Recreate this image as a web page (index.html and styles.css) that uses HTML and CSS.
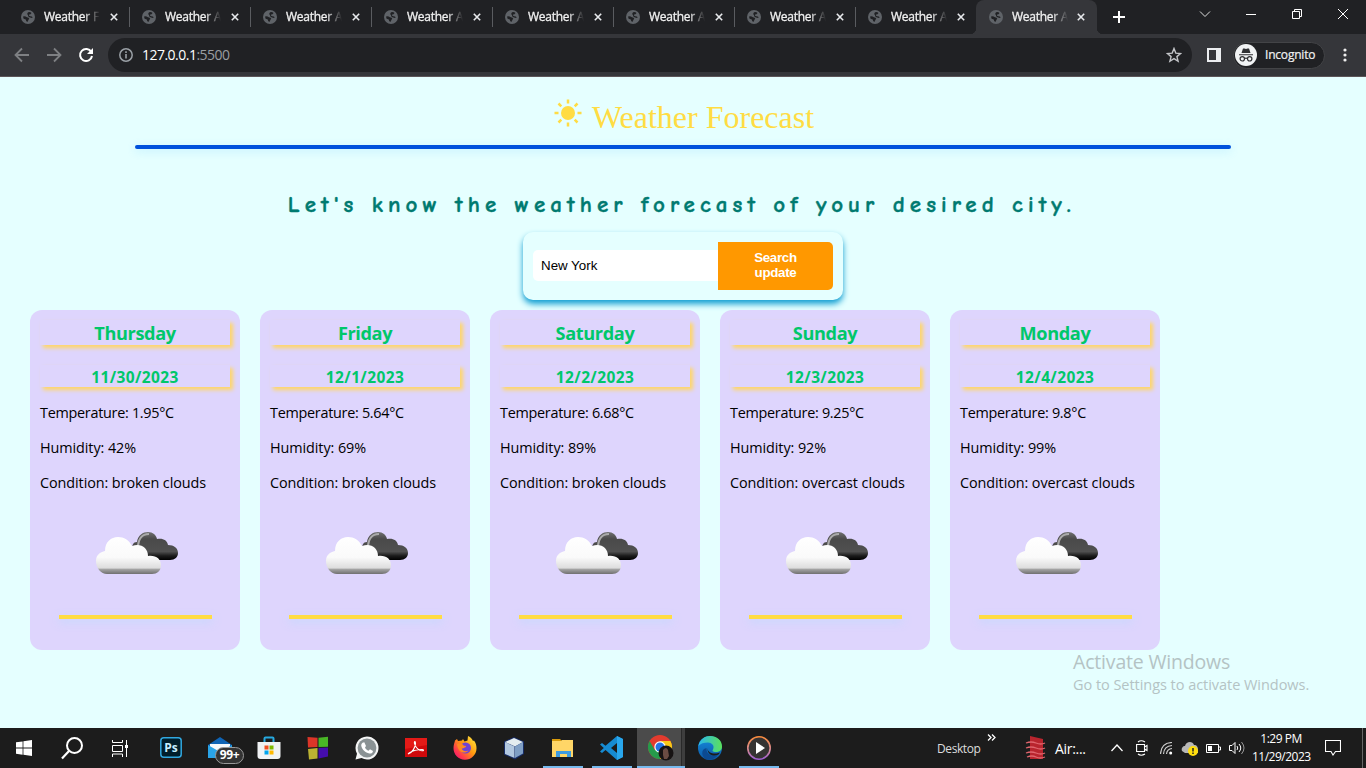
FILE: index.html
```html
<!DOCTYPE html>
<html lang="en">
<head>
<meta charset="utf-8">
<title>Weather Forecast</title>
<link rel="stylesheet" href="styles.css">
</head>
<body>
<svg class="defs" width="0" height="0">
  <defs>
    <linearGradient id="white-cloud" x1="0" y1="0" x2="0" y2="1"><stop offset="0" stop-color="#fff"/><stop offset=".55" stop-color="#fafafa"/><stop offset=".84" stop-color="#ddd"/><stop offset=".87" stop-color="#a5a5a5"/><stop offset="1" stop-color="#707070"/></linearGradient>
    <linearGradient id="dark-cloud" x1="0" y1="0" x2="0" y2="1"><stop offset="0" stop-color="#707070"/><stop offset=".25" stop-color="#4a4a4a"/><stop offset=".7" stop-color="#505050"/><stop offset=".85" stop-color="#1b1b1b"/><stop offset="1" stop-color="#000"/></linearGradient>
    <linearGradient id="fox" x1="1" y1="0" x2="0" y2="1"><stop offset="0" stop-color="#fff044"/><stop offset=".45" stop-color="#ff980e"/><stop offset=".75" stop-color="#ff3750"/><stop offset="1" stop-color="#eb0878"/></linearGradient>
    <linearGradient id="edge-a" x1="0" y1="0" x2="1" y2="0"><stop offset="0" stop-color="#2bb8ee"/><stop offset="1" stop-color="#5be15a"/></linearGradient>
    <linearGradient id="edge-b" x1="0" y1="0" x2="0" y2="1"><stop offset="0" stop-color="#168de1"/><stop offset="1" stop-color="#0c59a4"/></linearGradient>
    <linearGradient id="ring" x1="0" y1="0" x2="0" y2="1"><stop offset="0" stop-color="#f98b3c"/><stop offset=".6" stop-color="#d58a9a"/><stop offset="1" stop-color="#9a5bd0"/></linearGradient>
    <symbol id="globe" viewBox="0 0 14 14"><circle cx="7" cy="7" r="7" fill="#5f6368"/><path d="M2 6.500 4 6.200l2 1 1.600.5.6 1-.9 1.200-.5 1.800-1.600-.4-.4-1.800-2.200-.8zM7 2.300l2-.3 1.500 1-1 1.200-1.300.3-.4 1 1.500.8 1.500.2.8.8-.5.8-1.300-.4-1.900-.6L7 6V4.700l-1-.5z" fill="#202124"/></symbol>
    <symbol id="x" viewBox="0 0 8 8"><path d="m.8.8 6.400 6.400m0-6.400L.8 7.200" stroke="#e8eaed" stroke-width="1.600" fill="none"/></symbol>
    <symbol id="clouds" viewBox="0 0 86 46"><path d="M37 20c0-5 1-8 5-8 1-7 6-10 11-10s8 3 9 7c6-1 10 1 11 6 6 0 10 3 10 8 0 4-3 7-8 7H47c-7 0-10-4-10-10z" fill="url(#dark-cloud)"/><path d="M43 18c0-9 4-14 11-14" fill="none" stroke="#aaa" stroke-width="2.200"/><path d="M1 31c0-6 4-9 9-10C10 12 16 7 23 7c6 0 11 3 14 9 9-3 16 2 16 10 8-1 13 3 13 9s-4 9-9 9H12C6 44 1 38 1 31z" fill="url(#white-cloud)"/></symbol>
  </defs>
</svg>

<header class="browser">
  <nav class="tabs">
    <div class="tab"><svg class="globe"><use href="#globe"/></svg><span class="tab-title">Weather F</span><svg class="close"><use href="#x"/></svg></div>
    <div class="tab"><svg class="globe"><use href="#globe"/></svg><span class="tab-title">Weather A</span><svg class="close"><use href="#x"/></svg></div>
    <div class="tab"><svg class="globe"><use href="#globe"/></svg><span class="tab-title">Weather A</span><svg class="close"><use href="#x"/></svg></div>
    <div class="tab"><svg class="globe"><use href="#globe"/></svg><span class="tab-title">Weather A</span><svg class="close"><use href="#x"/></svg></div>
    <div class="tab"><svg class="globe"><use href="#globe"/></svg><span class="tab-title">Weather A</span><svg class="close"><use href="#x"/></svg></div>
    <div class="tab"><svg class="globe"><use href="#globe"/></svg><span class="tab-title">Weather A</span><svg class="close"><use href="#x"/></svg></div>
    <div class="tab"><svg class="globe"><use href="#globe"/></svg><span class="tab-title">Weather A</span><svg class="close"><use href="#x"/></svg></div>
    <div class="tab last"><svg class="globe"><use href="#globe"/></svg><span class="tab-title">Weather A</span><svg class="close"><use href="#x"/></svg></div>
    <div class="tab active"><svg class="globe"><use href="#globe"/></svg><span class="tab-title">Weather A</span><svg class="close"><use href="#x"/></svg></div>
    <svg class="new-tab" width="12" height="12"><path d="M6 0v12M0 6h12" stroke="#fff" stroke-width="2"/></svg>
    <div class="window-buttons">
      <svg width="12" height="12"><path d="m1 3.500 5 5 5-5" fill="none" stroke="#ddd"/></svg>
      <svg width="12" height="12"><path d="M1 6.500h10" stroke="#fff"/></svg>
      <svg width="12" height="12"><path d="M1.500 3.500h7v7h-7zM3.500 3V1.500h7v7H9" fill="none" stroke="#fff"/></svg>
      <svg width="12" height="12"><path d="m1 1 10 10M11 1 1 11" stroke="#fff"/></svg>
    </div>
  </nav>
  <div class="toolbar">
    <svg class="nav-icon" width="16" height="16"><path d="M15 8H2M8 1.500 1.500 8 8 14.500" fill="none" stroke="#7e8083" stroke-width="1.800"/></svg>
    <svg class="nav-icon" width="16" height="16"><path d="M1 8h13M8 1.500 14.500 8 8 14.500" fill="none" stroke="#7e8083" stroke-width="1.800"/></svg>
    <svg class="nav-icon" width="16" height="16"><path d="M13.300 5A6 6 0 1 0 14 9" fill="none" stroke="#fff" stroke-width="2"/><path d="M15 1v6H9z" fill="#fff"/></svg>
    <div class="address">
      <svg width="14" height="14"><circle cx="7" cy="7" r="6.200" fill="none" stroke="#9aa0a6" stroke-width="1.500"/><path d="M7 6v4.500M7 3.300v1.600" stroke="#9aa0a6" stroke-width="1.600"/></svg>
      <span class="url">127.0.0.1<span class="port">:5500</span></span>
      <svg width="16" height="16" viewBox="0 0 16 16"><path d="m8 1.500 1.800 4.600 4.700.4-3.600 3.100 1.200 4.700L8 11.700l-4.100 2.600 1.200-4.700L1.500 6.500l4.700-.4z" fill="none" stroke="#c3c5c8" stroke-width="1.400"/></svg>
    </div>
    <svg class="panel" width="14" height="14"><path d="M0 0h14v14H0zM2 2v10h7V2z" fill="#eceef0" fill-rule="evenodd"/></svg>
    <div class="incognito">
      <svg width="22" height="22"><circle cx="11" cy="11" r="11" fill="#f1f3f4"/><path d="M6.500 9 8 4.500h1.500l1.500.5 1.500-.5H14L15.500 9zM4 10.200h14v1.100H4z" fill="#303134"/><g fill="none" stroke="#303134" stroke-width="1.200"><circle cx="7.300" cy="14.800" r="2.200"/><circle cx="14.700" cy="14.800" r="2.200"/><path d="M9.500 14.500q1.500-.8 3 0"/></g></svg>
      <span>Incognito</span>
    </div>
    <svg class="more" width="4" height="14" fill="#eee"><circle cx="2" cy="2" r="1.600"/><circle cx="2" cy="7" r="1.600"/><circle cx="2" cy="12" r="1.600"/></svg>
  </div>
</header>

<main class="page">
  <div class="brand">
    <svg width="28" height="28" viewBox="0 0 28 28"><circle cx="14" cy="14" r="7" fill="#ffdc43"/><path d="M14 .5v4M14 23.500v4M.5 14h4M23.500 14h4M4.500 4.500 7.300 7.300M20.700 20.700l2.800 2.800M4.500 23.500l2.800-2.800M20.700 7.300l2.800-2.800" stroke="#ffdc43" stroke-width="2.500"/></svg>
    <h1>Weather Forecast</h1>
  </div>
  <div class="rule"></div>
  <h2 class="tagline">Let's know the weather forecast of your desired city.</h2>
  <form class="search">
    <input class="city" type="text" value="New York" aria-label="City">
    <button class="submit" type="button">Search<br>update</button>
  </form>
  <section class="cards">
    <article class="card"><h3>Thursday</h3><h4>11/30/2023</h4><p class="temp">Temperature: 1.95°C</p><p>Humidity: 42%</p><p>Condition: broken clouds</p><svg class="clouds"><use href="#clouds"/></svg><div class="bar"></div></article>
    <article class="card"><h3>Friday</h3><h4>12/1/2023</h4><p class="temp">Temperature: 5.64°C</p><p>Humidity: 69%</p><p>Condition: broken clouds</p><svg class="clouds"><use href="#clouds"/></svg><div class="bar"></div></article>
    <article class="card"><h3>Saturday</h3><h4>12/2/2023</h4><p class="temp">Temperature: 6.68°C</p><p>Humidity: 89%</p><p>Condition: broken clouds</p><svg class="clouds"><use href="#clouds"/></svg><div class="bar"></div></article>
    <article class="card"><h3>Sunday</h3><h4>12/3/2023</h4><p class="temp">Temperature: 9.25°C</p><p>Humidity: 92%</p><p>Condition: overcast clouds</p><svg class="clouds"><use href="#clouds"/></svg><div class="bar"></div></article>
    <article class="card"><h3>Monday</h3><h4>12/4/2023</h4><p class="temp">Temperature: 9.8°C</p><p>Humidity: 99%</p><p>Condition: overcast clouds</p><svg class="clouds"><use href="#clouds"/></svg><div class="bar"></div></article>
  </section>
  <aside class="watermark"><div class="wm-title">Activate Windows</div><div class="wm-text">Go to Settings to activate Windows.</div></aside>
</main>

<footer class="taskbar">
  <div class="slot"><svg width="16" height="16" fill="#fff"><path d="M0 2.300 6.600 1.400v6.200H0zM7.400 1.300 16 0v7.600H7.400zM0 8.400h6.600v6.300L0 13.800zM7.400 8.400H16V16l-8.600-1.200z"/></svg></div>
  <div class="slot"><svg width="24" height="24"><circle cx="14.500" cy="9.500" r="7.500" fill="none" stroke="#fff" stroke-width="2"/><path d="m9 15-7 7.500" stroke="#fff" stroke-width="2.200"/></svg></div>
  <div class="slot"><svg width="17" height="17"><path d="M.5 0v2.500h10V0M.5 17v-3h10v3M.5 5.500h10v6H.500zM14.500 0v17" fill="none" stroke="#fff"/><path d="M13 5h3v3h-3z" fill="#fff"/></svg></div>
  <div class="slot apps"><svg width="22" height="22"><rect x=".8" y=".8" width="20.400" height="19.400" rx="3" fill="#001e2b" stroke="#31a8e0" stroke-width="1.500"/><text x="11" y="15" class="ps">Ps</text></svg></div>
  <div class="slot mail"><svg width="26" height="24"><path d="m1 9 12-8 12 8v13H1z" fill="#0f64b5"/><path d="M3 8h20v9H3z" fill="#f5f8fb"/><path d="m1 9 12 7 12-7v13H1z" fill="#2aa4e8"/></svg><span class="count">99+</span></div>
  <div class="slot"><svg width="24" height="24"><path d="M7.500 7V2.500q0-1 1-1h7q1 0 1 1V7" fill="none" stroke="#26a9e0" stroke-width="2"/><path d="M.500 6h23v14q0 3-3 3h-17q-3 0-3-3z" fill="#f0f2f4"/><path d="M7.500 9.500h4v4h-4z" fill="#f25022"/><path d="M12.500 9.500h4v4h-4z" fill="#7fba00"/><path d="M7.500 14.500h4v4h-4z" fill="#00a4ef"/><path d="M12.500 14.500h4v4h-4z" fill="#ffb900"/></svg></div>
  <div class="slot"><svg width="24" height="24"><path d="m1.500 1 10 .8v9.200l-9.500.5z" fill="#dc3528"/><path d="m12.500 1.800 9.500-1v10l-9.500.2z" fill="#49b626"/><path d="m2 13 9.500-1v10.500L3 23.500z" fill="#bcb332"/><path d="m12.500 12 9.500-.5v9l-9.500 2z" fill="#450dad"/></svg></div>
  <div class="slot"><svg width="24" height="24"><path d="M12 .5A11.500 11.500 0 0 1 12 23.500a12 12 0 0 1-5.500-1.400L.500 23.500 2 17.700A11.500 11.500 0 0 1 12 .5z" fill="#f4f5f5"/><circle cx="12" cy="12" r="9.400" fill="#8a9294"/><path d="M7.500 6.800 9.300 6.300 11 10l-1 1.500c.8 1.700 2 2.800 3.500 3.300l1.500-1.500 3 1.600c-.2 2.200-2.200 3-3.700 2.600C10.500 16.800 7 13.500 6.300 10c-.2-1.300.2-2.400 1.200-3.200z" fill="#fff"/></svg></div>
  <div class="slot"><svg width="22" height="22"><path d="M0 1h22v19H0z" fill="#cf090b"/><path d="M0 1h22v7L0 12z" fill="#e41a17"/><path d="M4 16.500c3-1 6.500-6 6.500-10 0-2.500-1.500-2.500-1 0 .8 4 4.500 7 7.500 7.300 2 .2 2-1.300 0-1.300-4 0-9 1.200-12.500 3.200-1.500 1-1.500 1.500-.5.8z" fill="none" stroke="#fff" stroke-width="1.100"/></svg></div>
  <div class="slot"><svg width="24" height="24"><path d="M2 4.500 4 3l1 2 4-.5L10 3l1.500 2.500 3-1L15 0c3 1 4 3 5 5l1-.5c2 3 2.500 5 2.500 8A11.500 11.500 0 0 1 .500 12C.5 9 1.500 7 2 4.500z" fill="url(#fox)"/><circle cx="12.500" cy="12" r="5.500" fill="#6f43d4"/><path d="M4 8c4-1 6 0 7 2 1-.5 2 .2 2.200 1-2 0-2.200 2-4.500 1.500 1 3 4.500 3.300 6.800 2C13 18 5 18 4 8z" fill="#ff8921"/></svg></div>
  <div class="slot"><svg width="24" height="24"><path d="m12 1 10 4.500v12.500l-9 5.500L2 18.500V5.500z" fill="#172c66"/><path d="m12 2 9 4-8 4.500L3 6z" fill="#e4edf0"/><path d="m3 6 9.500 4.500V22L3 18z" fill="#b2c8e0"/><path d="m13 10.500 8-4.500v11.500L13 22z" fill="#7f9fc5"/></svg></div>
  <div class="slot open"><svg width="24" height="24"><path d="M1 3h8l2 2H1z" fill="#d99b0b"/><path d="M1 5h9l1-1h11v17H1z" fill="#ffd667"/><path d="M5 21v-6h15v6h-4v-3H9v3z" fill="#3f9ce0"/></svg></div>
  <div class="slot open"><svg width="26" height="24"><path d="m18 0 6 3v18l-6 3L6.500 14 3 17l-2-1.500L4.800 12 1 8.500 3 7l3.500 2.800z" fill="#168bd2"/><path d="m18 7-6 5 6 5z" fill="#1c1c1c"/><path d="m18 0 6 3v18l-6 3z" fill="#29a7ed"/></svg></div>
  <div class="slot open chrome"><svg width="26" height="26"><circle cx="12" cy="12" r="12" fill="#e33b2e"/><path d="M1.600 6A12 12 0 0 0 12 24l5.200-9H6.800z" fill="#269a4b"/><path d="M22.400 6A12 12 0 0 1 12 24l5.200-9L12 6z" fill="#f9c818"/><circle cx="12" cy="12" r="5.700" fill="#fff"/><circle cx="12" cy="12" r="4.500" fill="#2674e5"/><circle cx="18" cy="18" r="7.500" fill="#171313"/><path d="M15 15q3-4 5 0l1 6-2 3h-3l-1-4z" fill="#6b4c43"/></svg></div>
  <div class="slot"><svg width="24" height="24"><circle cx="12" cy="12" r="12" fill="url(#edge-b)"/><path d="M.3 10C2 3 7 0 12 0c7 0 12 4.500 12 10.500 0 4-3 5.500-6 5.500-3.500 0-4-1.500-3-2.500 2-4-1.500-7-5-7-4 0-7.500 1-9.700 3.500z" fill="url(#edge-a)"/><path d="M8.500 12c-.5 6 5 9 11.500 7-3 4-9 6-12.500 4C3 20 3 13 8.500 12z" fill="#0c4a91"/><path d="M9.500 12c0 4 4 6 9 5.500l3.500-1-1.500 2C15 21.500 9 18 9.500 12z" fill="#1c1c1c"/></svg></div>
  <div class="slot open"><svg width="24" height="24"><circle cx="12" cy="12" r="11.200" fill="#353332" stroke="url(#ring)" stroke-width="1.600"/><path d="m9 6 9 6-9 6z" fill="#fff"/></svg></div>

  <div class="tray">
    <span class="desktop">Desktop</span>
    <svg class="chevrons" width="9" height="7"><path d="m1 .500 3 3-3 3m4-6 3 3-3 3" fill="none" stroke="#fff" stroke-width="1.300"/></svg>
    <svg width="22" height="24"><path d="m5 0 13 3v20H5z" fill="#b9252e"/><path d="M1 7q5-2 10 0t9 0M1 12q5-2 10 0t9 0M1 17q5-2 10 0t9 0M2 21q5-2 9 0t9 0" fill="none" stroke="#e0656d" stroke-width="1.300"/></svg>
    <span class="air">Air:...</span>
    <svg width="12" height="8"><path d="m.5 7 5.500-6 5.500 6" fill="none" stroke="#fff" stroke-width="1.300"/></svg>
    <svg width="12" height="16"><path d="M.600 4.500h7.900v7H.600zM8.500 7 11 5.500v5L8.500 9M2 2q3-2.500 7 0M2 14q3 2.500 7 0" fill="none" stroke="#fff" stroke-width="1.100"/></svg>
    <svg width="13" height="13"><path d="M.500 12Q1 1 12 .5M3.500 12Q4 4 12 3.500M6.500 12Q7 7 12 6.500" fill="none" stroke="#ccc" stroke-width="1.200"/><circle cx="10.700" cy="11" r="1.500" fill="#fff"/></svg>
    <svg width="18" height="17"><path d="M1 11c-1-3 1-5 3-5 1-5 8-5 9-1 3 0 4 2 4 5v3H4z" fill="#b7b7b7"/><circle cx="12" cy="11" r="5" fill="#ffde0d"/><path d="M12 8v3.500m0 1v1.500" stroke="#222" stroke-width="1.500"/></svg>
    <svg width="15" height="9"><path d="M.500.500h12v8H.500zM13 3h1.500v3H13" fill="none" stroke="#fff"/><path d="M2 2h4v5H2z" fill="#fff"/></svg>
    <svg width="16" height="14"><path d="M.500 4.500H3l3-3v11l-3-3H.500zM8 5q1.500 2 0 4M10 3q3.500 4 0 8" fill="none" stroke="#fff"/><path d="M12.500 1q5 6 0 12" fill="none" stroke="#999"/></svg>
    <div class="clock"><div>1:29 PM</div><div>11/29/2023</div></div>
    <svg width="16" height="16"><path d="M.500.500h15v11h-5L8 15l-2-3.500H.500z" fill="none" stroke="#fff" stroke-width="1.100"/></svg>
    <span class="peek"></span>
  </div>
</footer>
</body>
</html>
```
FILE: styles.css
```css
* { box-sizing: border-box; }
body { margin: 0; height: 768px; display: flex; flex-direction: column; overflow: hidden; background: #e5ffff; font-family: "Segoe UI", "Open Sans", sans-serif; }
svg { display: block; flex: none; }
.defs { position: absolute; }
h1, h2, h3, h4, p { margin: 0; }

/* browser chrome */
.browser { height: 77px; flex: none; border-bottom: 1px solid #5c5558; background: #35363a; }
.tabs { height: 34px; display: flex; align-items: center; padding-left: 8px; background: #202124; }
.tab { position: relative; width: 121px; height: 34px; display: flex; align-items: center; padding-left: 13px; }
.tab::after { content: ""; position: absolute; right: -1px; top: 7px; width: 1px; height: 20px; background: #5a5c60; }
.tab.last::after, .tab.active::after { display: none; }
.tab.active { background: #35363a; border-radius: 8px 8px 0 0; }
.tab.active::before { content: ""; position: absolute; left: -6px; right: -6px; bottom: 0; height: 6px; background: radial-gradient(circle at 0 0, #202124 6px, #35363a 6.500px) 0 0 / 6px 6px no-repeat, radial-gradient(circle at 100% 0, #202124 6px, #35363a 6.500px) 100% 0 / 6px 6px no-repeat; }
.globe { width: 14px; height: 14px; }
.tab-title { width: 58px; margin: 0 8px 0 9px; white-space: nowrap; color: #f1f1f1; font-size: 12px; line-height: 18px; -webkit-text-stroke: .3px #f1f1f1; letter-spacing: -.25px; -webkit-mask-image: linear-gradient(90deg, #000 40px, transparent 56px); mask-image: linear-gradient(90deg, #000 40px, transparent 56px); }
.tab.active .tab-title { margin-right: 7px; }
.close { width: 8px; height: 8px; }
.new-tab { margin-left: 16px; }
.window-buttons { display: flex; gap: 34px; margin: -6px 17px 0 auto; }
.toolbar { height: 42px; display: flex; align-items: center; padding-left: 14px; }
.nav-icon { margin-right: 16px; }
.address { width: 1084px; height: 34px; margin-left: -2px; display: flex; align-items: center; padding: 0 10px 0 11px; border-radius: 17px; background: #202124; }
.url { flex: 1; padding: 0 0 2px 9px; color: #fff; font-size: 14px; letter-spacing: -.52px; }
.port { color: #9a9da1; }
.panel { margin-left: 15px; }
.incognito { width: 92px; height: 27px; margin-left: 12px; display: flex; align-items: center; gap: 8px; padding-left: 1px; border: 1px solid #434447; border-radius: 14px; background: #202124; color: #f1f1f1; font-size: 12px; letter-spacing: -.2px; -webkit-text-stroke: .2px #f1f1f1; }
.incognito span { padding-bottom: 1px; }
.more { margin-left: 18px; }

/* weather page */
.page { position: relative; height: 651px; flex: none; display: flex; flex-direction: column; }
.brand { height: 68px; display: flex; justify-content: center; gap: 10px; padding: 22px 0 0 2px; }
.brand h1 { color: #ffdc43; font: 400 32px/36px "Times New Roman", "Liberation Serif", serif; }
.rule { width: 1096px; height: 4px; margin: 0 auto; flex: none; border-radius: 2px; background: #0051dc; box-shadow: 0 2px 8px rgba(100, 200, 255, .3); }
.tagline { height: 83px; padding: 41px 2px 0 0; text-align: center; white-space: nowrap; color: #007a70; font: 700 23px/30px "Comic Sans MS", "Comic Neue", "Open Sans", sans-serif; letter-spacing: 5.080px; -webkit-text-stroke: .4px #007a70; }
.search { width: 320px; height: 68px; flex: none; margin: 0 auto; padding: 10px; display: flex; align-items: center; border-radius: 10px; box-shadow: 0 4px 6px #109ed2; background: #e5ffff; }
.city { width: 185px; height: 31px; margin-top: -1px; padding: 0 8px 1px; border: 0; border-radius: 5px 0 0 5px; background: #fff; color: #000; font: 13.330px "Liberation Sans", sans-serif; }
.submit { width: 115px; height: 48px; padding: 0 0 2px; border: 0; border-radius: 0 5px 5px 0; background: #ff9800; color: #fff; font: 700 13.330px/15px "Liberation Sans", sans-serif; letter-spacing: -.3px; }
.cards { display: flex; gap: 20px; padding: 10px 30px 0; }
.card { width: 210px; height: 340px; padding: 10px; border-radius: 12px; background: #ded5fd; }
.card h3, .card h4 { width: 190px; color: #00c76a; text-align: center; box-shadow: 3px 3px 4px #ffd666; }
.card h3 { height: 25px; margin-bottom: 20px; font-size: 18.200px; line-height: 26px; letter-spacing: -.4px; }
.card h4 { height: 22px; margin-bottom: 15px; font-size: 15.500px; line-height: 24px; letter-spacing: .38px; }
.card p { height: 20px; margin-bottom: 15px; color: #000; font-size: 14.400px; line-height: 22px; letter-spacing: -.08px; white-space: nowrap; }
.card .temp { letter-spacing: -.28px; }
.clouds { width: 86px; height: 46px; margin: 38px auto 39px 55px; filter: blur(.35px); }
.bar { width: 153px; height: 4px; margin-left: 19px; background: #ffdc43; box-shadow: 0 3px 8px rgba(180, 220, 255, .7); }
.watermark { position: absolute; left: 1073px; top: 573px; color: #b4c3c4; white-space: nowrap; }
.wm-title { font-size: 19.500px; line-height: 24px; letter-spacing: -.18px; }
.wm-text { font-size: 14.500px; line-height: 22px; letter-spacing: -.04px; }

/* taskbar */
.taskbar { height: 40px; flex: none; display: flex; background: #1c1c1c; color: #fff; }
.slot { position: relative; width: 48px; height: 40px; flex: none; display: flex; align-items: center; justify-content: center; }
.apps { margin-left: 3px; }
.apps ~ .slot { margin-left: 1px; }
.ps { fill: #c7eeff; font: 700 12px "Open Sans", sans-serif; text-anchor: middle; }
.count { position: absolute; left: 19px; top: 19px; width: 29px; height: 17px; border: 1px solid #999; border-radius: 9px; background: #333; font-size: 12px; font-weight: 700; line-height: 14px; letter-spacing: -.3px; text-align: center; }
.open::after { content: ""; position: absolute; left: 4px; right: 4px; bottom: 0; height: 2px; background: #76b9ed; }
.chrome { background: linear-gradient(90deg, #4b4b4b 0 44px, #292929 44px 45px, #3e3e3e 45px); }
.chrome::after { left: 0; right: 0; }
.tray { width: 429px; height: 40px; margin-left: auto; display: grid; grid-template-columns: 50px 38px 30px 56px 25px 24px 21px 25px 23px 23px 73px 37px 4px; align-items: center; font-size: 12px; }
.desktop { letter-spacing: -.4px; color: #ddd; }
.chevrons { margin-top: -22px; }
.air { font-size: 14px; letter-spacing: -.3px; }
.clock { width: 58px; text-align: center; line-height: 18px; font-size: 12px; letter-spacing: -.5px; white-space: nowrap; }
.peek { width: 1px; height: 40px; background: #666; }
```
